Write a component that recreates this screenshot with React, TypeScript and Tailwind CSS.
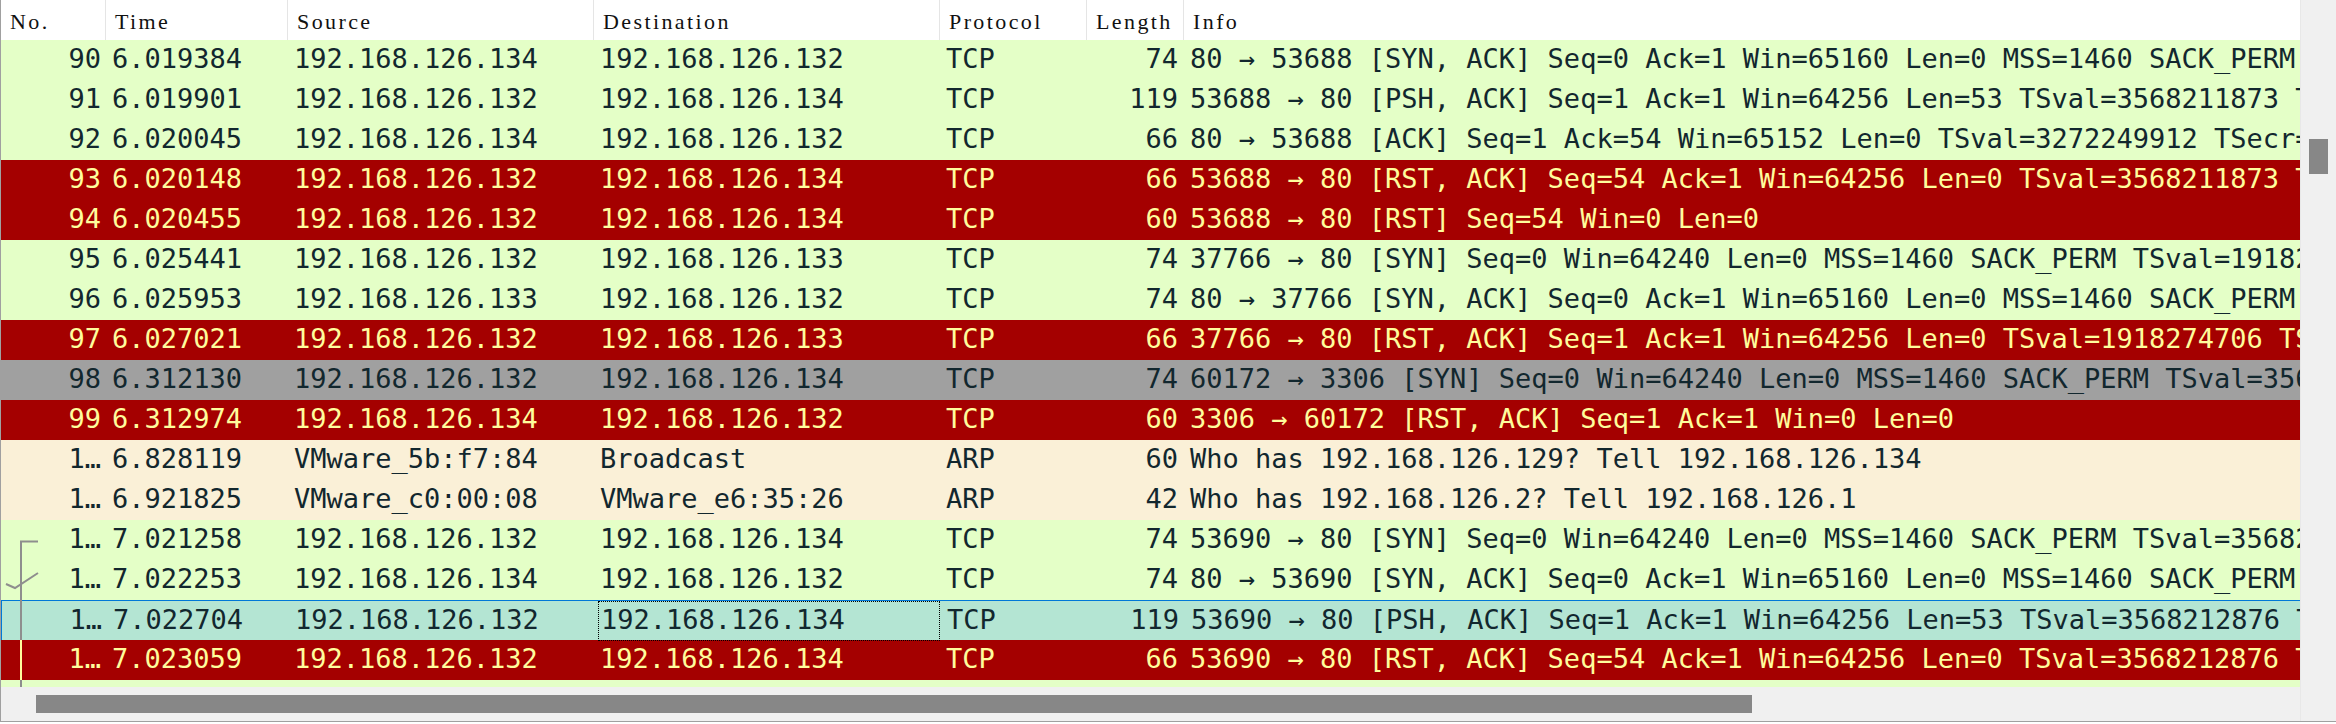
import React from "react";

type Kind = "g" | "r" | "gray" | "arp" | "sel";
type Row = {
  no: string;
  time: string;
  src: string;
  dst: string;
  proto: string;
  len: string;
  info: string;
  kind: Kind;
};

const rows: Row[] = [
  { no: "90", time: "6.019384", src: "192.168.126.134", dst: "192.168.126.132", proto: "TCP", len: "74", info: "80 → 53688 [SYN, ACK] Seq=0 Ack=1 Win=65160 Len=0 MSS=1460 SACK_PERM TSval=3272249911 TSecr=3568211872 WS=128", kind: "g" },
  { no: "91", time: "6.019901", src: "192.168.126.132", dst: "192.168.126.134", proto: "TCP", len: "119", info: "53688 → 80 [PSH, ACK] Seq=1 Ack=1 Win=64256 Len=53 TSval=3568211873 TSecr=3272249911", kind: "g" },
  { no: "92", time: "6.020045", src: "192.168.126.134", dst: "192.168.126.132", proto: "TCP", len: "66", info: "80 → 53688 [ACK] Seq=1 Ack=54 Win=65152 Len=0 TSval=3272249912 TSecr=3568211873", kind: "g" },
  { no: "93", time: "6.020148", src: "192.168.126.132", dst: "192.168.126.134", proto: "TCP", len: "66", info: "53688 → 80 [RST, ACK] Seq=54 Ack=1 Win=64256 Len=0 TSval=3568211873 TSecr=3272249912", kind: "r" },
  { no: "94", time: "6.020455", src: "192.168.126.132", dst: "192.168.126.134", proto: "TCP", len: "60", info: "53688 → 80 [RST] Seq=54 Win=0 Len=0", kind: "r" },
  { no: "95", time: "6.025441", src: "192.168.126.132", dst: "192.168.126.133", proto: "TCP", len: "74", info: "37766 → 80 [SYN] Seq=0 Win=64240 Len=0 MSS=1460 SACK_PERM TSval=1918274705 TSecr=0 WS=128", kind: "g" },
  { no: "96", time: "6.025953", src: "192.168.126.133", dst: "192.168.126.132", proto: "TCP", len: "74", info: "80 → 37766 [SYN, ACK] Seq=0 Ack=1 Win=65160 Len=0 MSS=1460 SACK_PERM TSval=2204311 TSecr=1918274705", kind: "g" },
  { no: "97", time: "6.027021", src: "192.168.126.132", dst: "192.168.126.133", proto: "TCP", len: "66", info: "37766 → 80 [RST, ACK] Seq=1 Ack=1 Win=64256 Len=0 TSval=1918274706 TSecr=2204311", kind: "r" },
  { no: "98", time: "6.312130", src: "192.168.126.132", dst: "192.168.126.134", proto: "TCP", len: "74", info: "60172 → 3306 [SYN] Seq=0 Win=64240 Len=0 MSS=1460 SACK_PERM TSval=3568212165 TSecr=0 WS=128", kind: "gray" },
  { no: "99", time: "6.312974", src: "192.168.126.134", dst: "192.168.126.132", proto: "TCP", len: "60", info: "3306 → 60172 [RST, ACK] Seq=1 Ack=1 Win=0 Len=0", kind: "r" },
  { no: "1…", time: "6.828119", src: "VMware_5b:f7:84", dst: "Broadcast", proto: "ARP", len: "60", info: "Who has 192.168.126.129? Tell 192.168.126.134", kind: "arp" },
  { no: "1…", time: "6.921825", src: "VMware_c0:00:08", dst: "VMware_e6:35:26", proto: "ARP", len: "42", info: "Who has 192.168.126.2? Tell 192.168.126.1", kind: "arp" },
  { no: "1…", time: "7.021258", src: "192.168.126.132", dst: "192.168.126.134", proto: "TCP", len: "74", info: "53690 → 80 [SYN] Seq=0 Win=64240 Len=0 MSS=1460 SACK_PERM TSval=3568212875 TSecr=0 WS=128", kind: "g" },
  { no: "1…", time: "7.022253", src: "192.168.126.134", dst: "192.168.126.132", proto: "TCP", len: "74", info: "80 → 53690 [SYN, ACK] Seq=0 Ack=1 Win=65160 Len=0 MSS=1460 SACK_PERM TSval=3272250914 TSecr=3568212875", kind: "g" },
  { no: "1…", time: "7.022704", src: "192.168.126.132", dst: "192.168.126.134", proto: "TCP", len: "119", info: "53690 → 80 [PSH, ACK] Seq=1 Ack=1 Win=64256 Len=53 TSval=3568212876 TSecr=3272250914", kind: "sel" },
  { no: "1…", time: "7.023059", src: "192.168.126.132", dst: "192.168.126.134", proto: "TCP", len: "66", info: "53690 → 80 [RST, ACK] Seq=54 Ack=1 Win=64256 Len=0 TSval=3568212876 TSecr=3272250914", kind: "r" },
];

const kindClass: Record<Kind, string> = {
  g: "bg-[#e4ffc7] text-[#12272e]",
  r: "bg-[#a40000] text-[#fffc9c]",
  gray: "bg-[#a0a0a0] text-[#12272e]",
  arp: "bg-[#faf0d7] text-[#12272e]",
  sel: "bg-[#b4e5d3] text-[#12272e] border-t border-l border-[#0078d7]",
};

function Header() {
  const cell =
    "shrink-0 h-[40px] pl-[9px] pt-[4px] leading-[36px] border-r border-[#e5e5e5]";
  return (
    <div className="flex h-[40px] bg-white whitespace-nowrap font-['Liberation_Serif',serif] text-[22px] tracking-[2.4px] text-[#111111]">
      <div className={`${cell} w-[105px]`}>No.</div>
      <div className={`${cell} w-[182px]`}>Time</div>
      <div className={`${cell} w-[306px]`}>Source</div>
      <div className={`${cell} w-[346px]`}>Destination</div>
      <div className={`${cell} w-[147px]`}>Protocol</div>
      <div className={`${cell} w-[97px]`}>Length</div>
      <div className={`${cell} w-[1400px]`}>Info</div>
    </div>
  );
}

function PacketRow({ r }: { r: Row }) {
  return (
    <div
      className={`flex h-[40px] box-border leading-[38px] whitespace-nowrap ${kindClass[r.kind]}`}
    >
      <div className="shrink-0 w-[105px] pr-[5px] text-right">{r.no}</div>
      <div className="shrink-0 w-[182px] pl-[6px]">{r.time}</div>
      <div className="shrink-0 w-[306px] pl-[6px]">{r.src}</div>
      <div className="relative shrink-0 w-[346px] pl-[6px]">
        {r.dst}
        {r.kind === "sel" && (
          <span className="absolute left-[3px] right-[1px] top-0 h-[40px] border border-dotted border-black" />
        )}
      </div>
      <div className="shrink-0 w-[147px] pl-[6px]">{r.proto}</div>
      <div className="shrink-0 w-[97px] pr-[6px] text-right">{r.len}</div>
      <div className="shrink-0 w-[1400px] pl-[6px]">{r.info}</div>
    </div>
  );
}

export default function App() {
  return (
    <div className="w-[2336px] h-[724px] bg-white overflow-hidden">
      <div className="flex h-[722px] border-l border-b border-[#a0a0a0] bg-[#f0f0f0]">
        <div className="flex flex-col w-[2299px] shrink-0">
          <div className="relative h-[687px] overflow-hidden bg-white">
            <Header />
            <div className="font-['DejaVu_Sans_Mono',monospace] text-[27px]">
              {rows.map((r, i) => (
                <PacketRow key={i} r={r} />
              ))}
              <div className="h-[7px] bg-[#e4ffc7]" />
            </div>
            <svg
              className="absolute left-0 top-0"
              width="60"
              height="687"
              viewBox="0 0 60 687"
            >
              <path d="M37 541.5 H20 V640" fill="none" stroke="#8e8e8e" strokeWidth="2" />
              <path d="M20 640 V680" fill="none" stroke="#fffc9c" strokeWidth="2" />
              <path d="M20 680 V687" fill="none" stroke="#8e8e8e" strokeWidth="2" />
              <polyline points="5,584 14,588 37,573" fill="none" stroke="#8e8e8e" strokeWidth="2" />
            </svg>
          </div>
          <div className="h-[34px] pt-[8px] pl-[35px]">
            <div className="w-[1716px] h-[18px] bg-[#878787]" />
          </div>
        </div>
        <div className="w-[36px] shrink-0 pt-[139px] pl-[8px] border-l border-[#e8e8e8]">
          <div className="w-[19px] h-[35px] bg-[#878787]" />
        </div>
      </div>
    </div>
  );
}
